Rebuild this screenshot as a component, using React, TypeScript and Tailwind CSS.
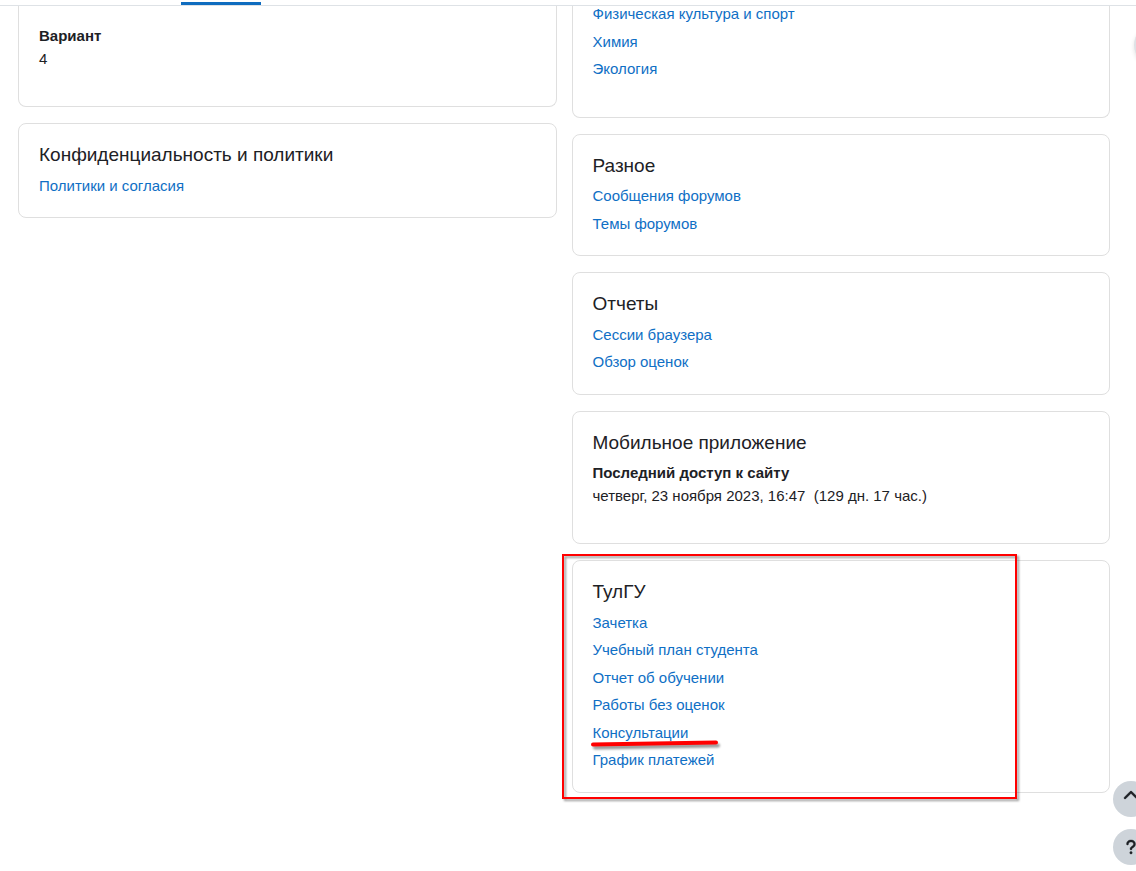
import type { ReactNode } from 'react';
import { FaChevronUp, FaQuestion } from 'react-icons/fa6';

const subjects = ['Физическая культура и спорт', 'Химия', 'Экология'];
const misc = ['Сообщения форумов', 'Темы форумов'];
const reports = ['Сессии браузера', 'Обзор оценок'];
const university = [
  'Зачетка',
  'Учебный план студента',
  'Отчет об обучении',
  'Работы без оценок',
  'Консультации',
  'График платежей',
];

function Card({ title, children }: { title: string; children: ReactNode }) {
  return (
    <section className="relative rounded-lg border border-[#dfdfdf] bg-white px-5 pt-[17px] pb-[15px]">
      <h3 className="mb-[5px] text-[19px] leading-normal">{title}</h3>
      {children}
    </section>
  );
}

function LinkList({ items, marked }: { items: string[]; marked?: string }) {
  return (
    <ul>
      {items.map((item) => (
        <li key={item} className="relative pb-[5px]">
          <a href="#" className="text-[#0f6fc5] hover:underline">{item}</a>
          {item === marked && <Underline />}
        </li>
      ))}
    </ul>
  );
}

function Details({ term, value }: { term: string; value: string }) {
  return (
    <dl className="pb-[21px]">
      <dt className="font-bold">{term}</dt>
      <dd className="whitespace-pre-wrap">{value}</dd>
    </dl>
  );
}

// red marker stroke under a link
function Underline() {
  return (
    <svg
      className="pointer-events-none absolute -left-1 top-4 z-10 drop-shadow-[2px_3px_1px_rgba(0,0,0,0.4)]"
      width="136"
      height="12"
      viewBox="0 0 136 12"
      fill="none"
      aria-hidden="true"
    >
      <path d="M4 6.5 L127 4.5" stroke="#ff0000" strokeWidth="4" strokeLinecap="round" />
    </svg>
  );
}

export default function App() {
  return (
    <div className="font-['Liberation_Sans',Arial,sans-serif] text-[15px] leading-normal text-[#1d2125]">
      <header className="fixed inset-x-0 top-0 z-20 flex h-[6px] items-end border-b border-[#dee2e6] bg-white pl-[181px]">
        <div className="h-[3px] w-20 bg-[#0f6cbf]"></div>
      </header>

      <main className="grid grid-cols-2 items-start gap-[15px] pb-10 pl-[18px] pr-[26px]">
        <div className="flex flex-col gap-4">
          <section className="rounded-b-lg border border-t-0 border-[#dfdfdf] px-5 pt-[25px] pb-[15px]">
            <Details term="Вариант" value="4" />
          </section>
          <Card title="Конфиденциальность и политики">
            <LinkList items={['Политики и согласия']} />
          </Card>
        </div>

        <div className="flex flex-col gap-4">
          <section className="rounded-b-lg border border-t-0 border-[#dfdfdf] px-5 pt-[3px] pb-[31px]">
            <LinkList items={subjects} />
          </section>
          <Card title="Разное">
            <LinkList items={misc} />
          </Card>
          <Card title="Отчеты">
            <LinkList items={reports} />
          </Card>
          <Card title="Мобильное приложение">
            <Details
              term="Последний доступ к сайту"
              value={'четверг, 23 ноября 2023, 16:47\u00a0 (129 дн. 17 час.)'}
            />
          </Card>
          <Card title="ТулГУ">
            <LinkList items={university} marked="Консультации" />
            {/* Highlight frame */}
            <div className="pointer-events-none absolute -top-[7px] right-[92px] -bottom-[7px] -left-[11px] border-2 border-[#ff0000] drop-shadow-[2px_2px_1px_rgba(0,0,0,0.4)]"></div>
          </Card>
        </div>
      </main>

      <button
        aria-label="Открыть панель блоков"
        className="fixed -right-[38px] top-[25px] size-10 rounded-full bg-[#dee2e6] shadow-[0_2px_4px_rgba(0,0,0,0.12)]"
      ></button>

      <div className="fixed -right-[13px] bottom-[6px] flex flex-col gap-3">
        <button aria-label="Наверх" className="flex size-9 justify-center rounded-full bg-[#ced4da] pt-[7px]">
          <FaChevronUp className="size-4 stroke-current stroke-[12px]" />
        </button>
        <button aria-label="Справка" className="flex size-9 items-center justify-center rounded-full bg-[#ced4da]">
          <FaQuestion className="size-4 stroke-current stroke-[12px]" />
        </button>
      </div>
    </div>
  );
}
